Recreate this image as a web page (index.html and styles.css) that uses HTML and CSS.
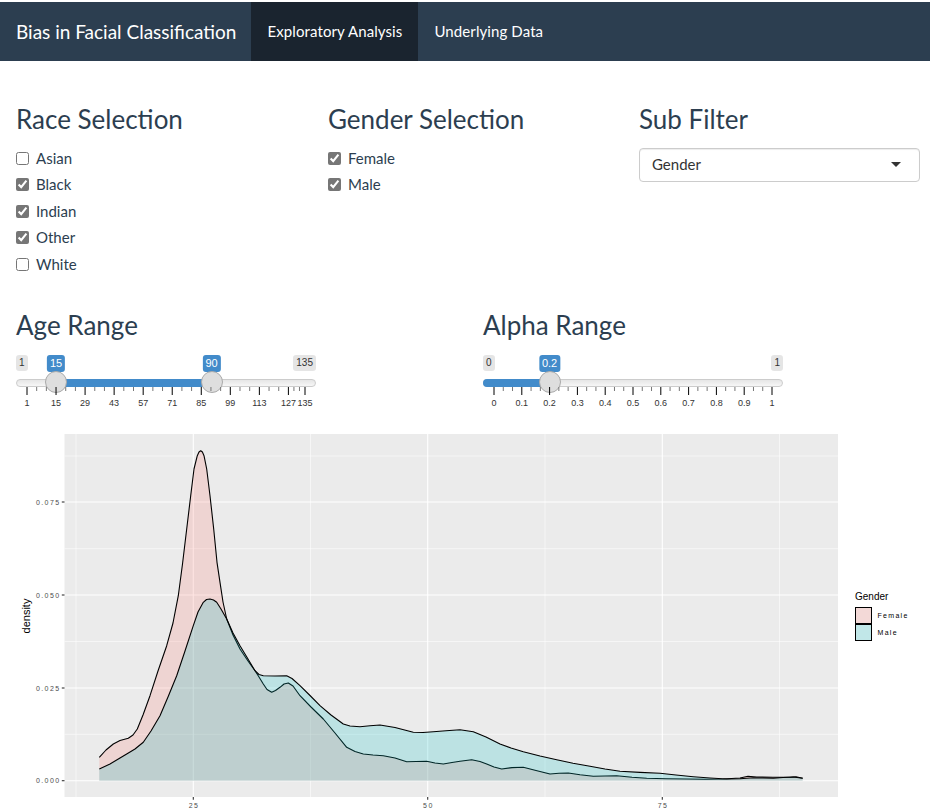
FILE: index.html
```html
<!DOCTYPE html>
<html lang="en">
<head>
<meta charset="utf-8">
<title>Bias in Facial Classification</title>
<link rel="stylesheet" href="styles.css">
</head>
<body>
<nav class="navbar">
  <span class="brand">Bias in Facial Classification</span>
  <ul class="nav">
    <li class="nav-item active"><a href="#">Exploratory Analysis</a></li>
    <li class="nav-item"><a href="#">Underlying Data</a></li>
  </ul>
</nav>

<main class="page">
  <section class="filters">
    <div class="col">
      <h3 class="title">Race Selection</h3>
      <div class="checks">
        <label class="check"><input type="checkbox">Asian</label>
        <label class="check"><input type="checkbox" checked>Black</label>
        <label class="check"><input type="checkbox" checked>Indian</label>
        <label class="check"><input type="checkbox" checked>Other</label>
        <label class="check"><input type="checkbox">White</label>
      </div>
    </div>
    <div class="col">
      <h3 class="title">Gender Selection</h3>
      <div class="checks">
        <label class="check"><input type="checkbox" checked>Female</label>
        <label class="check"><input type="checkbox" checked>Male</label>
      </div>
    </div>
    <div class="col">
      <h3 class="title">Sub Filter</h3>
      <div class="select"><span>Gender</span><span class="caret"></span></div>
    </div>
  </section>

  <section class="ranges">
    <div class="col">
      <h3 class="title">Age Range</h3>
      <div class="slider">
        <span class="irs-min">1</span>
        <span class="irs-max">135</span>
        <div class="irs-line"></div>
        <div class="irs-bar" style="left:40.04px;width:155.6px"></div>
        <span class="irs-val" style="left:40.04px">15</span>
        <span class="irs-val" style="left:195.64px">90</span>
        <span class="irs-handle" style="left:29.04px"></span>
        <span class="irs-handle" style="left:184.64px"></span>
        <svg class="irs-grid" width="300" height="24" viewBox="0 0 300 24">
          <g class="big">
            <line x1="11" y1="0" x2="11" y2="8"/><line x1="40.04" y1="0" x2="40.04" y2="8"/><line x1="69.09" y1="0" x2="69.09" y2="8"/><line x1="98.13" y1="0" x2="98.13" y2="8"/><line x1="127.18" y1="0" x2="127.18" y2="8"/><line x1="156.22" y1="0" x2="156.22" y2="8"/><line x1="185.27" y1="0" x2="185.27" y2="8"/><line x1="214.31" y1="0" x2="214.31" y2="8"/><line x1="243.36" y1="0" x2="243.36" y2="8"/><line x1="272.4" y1="0" x2="272.4" y2="8"/><line x1="289" y1="0" x2="289" y2="8"/>
          </g>
          <g class="small">
            <line x1="20.68" y1="0" x2="20.68" y2="4"/><line x1="30.36" y1="0" x2="30.36" y2="4"/>
            <line x1="49.72" y1="0" x2="49.72" y2="4"/><line x1="59.41" y1="0" x2="59.41" y2="4"/>
            <line x1="78.77" y1="0" x2="78.77" y2="4"/><line x1="88.45" y1="0" x2="88.45" y2="4"/>
            <line x1="107.81" y1="0" x2="107.81" y2="4"/><line x1="117.5" y1="0" x2="117.5" y2="4"/>
            <line x1="136.86" y1="0" x2="136.86" y2="4"/><line x1="146.54" y1="0" x2="146.54" y2="4"/>
            <line x1="165.9" y1="0" x2="165.9" y2="4"/><line x1="175.59" y1="0" x2="175.59" y2="4"/>
            <line x1="194.95" y1="0" x2="194.95" y2="4"/><line x1="204.63" y1="0" x2="204.63" y2="4"/>
            <line x1="223.99" y1="0" x2="223.99" y2="4"/><line x1="233.68" y1="0" x2="233.68" y2="4"/>
            <line x1="253.04" y1="0" x2="253.04" y2="4"/><line x1="262.72" y1="0" x2="262.72" y2="4"/>
            <line x1="277.93" y1="0" x2="277.93" y2="4"/><line x1="283.47" y1="0" x2="283.47" y2="4"/>
          </g>
          <g class="txt">
            <text x="11" y="19">1</text><text x="40.04" y="19">15</text><text x="69.09" y="19">29</text><text x="98.13" y="19">43</text><text x="127.18" y="19">57</text><text x="156.22" y="19">71</text><text x="185.27" y="19">85</text><text x="214.31" y="19">99</text><text x="243.36" y="19">113</text><text x="272.4" y="19">127</text><text x="289" y="19">135</text>
          </g>
        </svg>
      </div>
    </div>
    <div class="col">
      <h3 class="title">Alpha Range</h3>
      <div class="slider">
        <span class="irs-min">0</span>
        <span class="irs-max">1</span>
        <div class="irs-line"></div>
        <div class="irs-bar single" style="left:0;width:66.6px"></div>
        <span class="irs-val" style="left:66.6px">0.2</span>
        <span class="irs-handle" style="left:55.6px"></span>
        <svg class="irs-grid" width="300" height="24" viewBox="0 0 300 24">
          <g class="big">
            <line x1="11" y1="0" x2="11" y2="8"/><line x1="38.8" y1="0" x2="38.8" y2="8"/><line x1="66.6" y1="0" x2="66.6" y2="8"/><line x1="94.4" y1="0" x2="94.4" y2="8"/><line x1="122.2" y1="0" x2="122.2" y2="8"/><line x1="150" y1="0" x2="150" y2="8"/><line x1="177.8" y1="0" x2="177.8" y2="8"/><line x1="205.6" y1="0" x2="205.6" y2="8"/><line x1="233.4" y1="0" x2="233.4" y2="8"/><line x1="261.2" y1="0" x2="261.2" y2="8"/><line x1="289" y1="0" x2="289" y2="8"/>
          </g>
          <g class="small">
            <line x1="20.27" y1="0" x2="20.27" y2="4"/><line x1="29.53" y1="0" x2="29.53" y2="4"/>
            <line x1="48.07" y1="0" x2="48.07" y2="4"/><line x1="57.33" y1="0" x2="57.33" y2="4"/>
            <line x1="75.87" y1="0" x2="75.87" y2="4"/><line x1="85.13" y1="0" x2="85.13" y2="4"/>
            <line x1="103.67" y1="0" x2="103.67" y2="4"/><line x1="112.93" y1="0" x2="112.93" y2="4"/>
            <line x1="131.47" y1="0" x2="131.47" y2="4"/><line x1="140.73" y1="0" x2="140.73" y2="4"/>
            <line x1="159.27" y1="0" x2="159.27" y2="4"/><line x1="168.53" y1="0" x2="168.53" y2="4"/>
            <line x1="187.07" y1="0" x2="187.07" y2="4"/><line x1="196.33" y1="0" x2="196.33" y2="4"/>
            <line x1="214.87" y1="0" x2="214.87" y2="4"/><line x1="224.13" y1="0" x2="224.13" y2="4"/>
            <line x1="242.67" y1="0" x2="242.67" y2="4"/><line x1="251.93" y1="0" x2="251.93" y2="4"/>
            <line x1="270.47" y1="0" x2="270.47" y2="4"/><line x1="279.73" y1="0" x2="279.73" y2="4"/>
          </g>
          <g class="txt">
            <text x="11" y="19">0</text><text x="38.8" y="19">0.1</text><text x="66.6" y="19">0.2</text><text x="94.4" y="19">0.3</text><text x="122.2" y="19">0.4</text><text x="150" y="19">0.5</text><text x="177.8" y="19">0.6</text><text x="205.6" y="19">0.7</text><text x="233.4" y="19">0.8</text><text x="261.2" y="19">0.9</text><text x="289" y="19">1</text>
          </g>
        </svg>
      </div>
    </div>
  </section>

  <section class="plot">
    <svg class="chart" width="916" height="381" viewBox="15 430 916 381">
      <rect x="15" y="430" width="916" height="381" fill="#fff"/>
      <rect x="64.5" y="435" width="773.5" height="363" fill="#ebebeb"/>
      <g class="minor">
        <line x1="76" y1="435" x2="76" y2="798"/><line x1="310.5" y1="435" x2="310.5" y2="798"/><line x1="545" y1="435" x2="545" y2="798"/><line x1="779.5" y1="435" x2="779.5" y2="798"/>
        <line x1="64.5" y1="457" x2="838" y2="457"/><line x1="64.5" y1="549.7" x2="838" y2="549.7"/><line x1="64.5" y1="642.5" x2="838" y2="642.5"/><line x1="64.5" y1="735.3" x2="838" y2="735.3"/>
      </g>
      <g class="major">
        <line x1="193.3" y1="435" x2="193.3" y2="798"/><line x1="427.7" y1="435" x2="427.7" y2="798"/><line x1="662.3" y1="435" x2="662.3" y2="798"/>
        <line x1="64.5" y1="503" x2="838" y2="503"/><line x1="64.5" y1="596" x2="838" y2="596"/><line x1="64.5" y1="689" x2="838" y2="689"/><line x1="64.5" y1="781.7" x2="838" y2="781.7"/>
      </g>

      <path class="fill-f" d="M99.3,758.3 L106,751 L113.3,745 L120,741.5 L128.3,739.3 L133,736 L137.3,730 L143,716 L150,696.7 L158,672 L166.7,646.7 L173,624 L178.3,596.7 L182.5,565 L186.7,530 L190.7,496.7 L194,470 L197.3,456.7 L199,453 L200.7,451.7 L202.4,453 L204,456.7 L206.7,470 L210,496.7 L213.7,530 L217,563.3 L220,583.3 L223,603 L226.7,620 L233,636 L240,650 L248,662 L255,671.7 L259,678 L263.3,685 L267,690.5 L271.7,693.3 L275.5,691.5 L280,688.3 L284,685 L288.3,684 L293,687 L300,696.7 L311,708 L323.3,720 L335,734 L346.7,748.3 L355,752.5 L363.3,755 L373,756 L383.3,756.7 L395,759 L406.7,762.7 L416,762.5 L426.7,762.3 L435,764 L443.3,765 L452,763.5 L460,762.3 L471.7,760.7 L480,762.5 L486.7,765 L494,768 L501.7,770 L512,768.6 L523.3,768.3 L536,771.5 L550,775 L559,774.3 L568.3,774 L580,775.8 L593.3,777.3 L605,777 L616.7,776.7 L632,778.2 L646.7,779.3 L666,779.8 L686.7,780 L705,780.2 L723.3,780 L740,779 L748,777.3 L756.7,778 L773,778.3 L790,778.3 L796,777.8 L802.7,779.3 L802.7,781.7 L99.3,781.7 Z"/>
      <path class="line" d="M99.3,758.3 L106,751 L113.3,745 L120,741.5 L128.3,739.3 L133,736 L137.3,730 L143,716 L150,696.7 L158,672 L166.7,646.7 L173,624 L178.3,596.7 L182.5,565 L186.7,530 L190.7,496.7 L194,470 L197.3,456.7 L199,453 L200.7,451.7 L202.4,453 L204,456.7 L206.7,470 L210,496.7 L213.7,530 L217,563.3 L220,583.3 L223,603 L226.7,620 L233,636 L240,650 L248,662 L255,671.7 L259,678 L263.3,685 L267,690.5 L271.7,693.3 L275.5,691.5 L280,688.3 L284,685 L288.3,684 L293,687 L300,696.7 L311,708 L323.3,720 L335,734 L346.7,748.3 L355,752.5 L363.3,755 L373,756 L383.3,756.7 L395,759 L406.7,762.7 L416,762.5 L426.7,762.3 L435,764 L443.3,765 L452,763.5 L460,762.3 L471.7,760.7 L480,762.5 L486.7,765 L494,768 L501.7,770 L512,768.6 L523.3,768.3 L536,771.5 L550,775 L559,774.3 L568.3,774 L580,775.8 L593.3,777.3 L605,777 L616.7,776.7 L632,778.2 L646.7,779.3 L666,779.8 L686.7,780 L705,780.2 L723.3,780 L740,779 L748,777.3 L756.7,778 L773,778.3 L790,778.3 L796,777.8 L802.7,779.3"/>
      <path class="fill-m" d="M99.3,770 L110,765 L120,759 L126.7,755 L135,750 L143.3,743.3 L151,732 L160,716.7 L168,698 L176.7,676.7 L185,652 L193.3,626.7 L198,613 L203.3,603.3 L206.5,600.5 L210,600 L213.5,601 L216.7,603.3 L221,610 L226.7,620 L233,634 L240,646.7 L248,660 L255,671.7 L259,675.5 L263.3,676.7 L275,677 L286.7,676.7 L292,679.5 L300,686.7 L310,696.5 L320,706.7 L331,716 L343.3,725 L350,727 L360,727.7 L370,726.8 L380,726 L395,728.5 L413.3,733.3 L423,733.5 L433.3,732.7 L446,731.8 L460,730.7 L473.3,732.7 L486,738 L500,745 L511,749 L523.3,752.7 L540,757 L556.7,760.7 L573,764.2 L590,767.3 L605,770 L620,772.3 L640,773.4 L660,774.3 L676,776 L693.3,777.7 L710,779 L726.7,780 L740,779.8 L753.3,778.7 L763,779 L773.3,779.3 L783,778.5 L793.3,778 L802.7,779.3 L802.7,781.7 L99.3,781.7 Z"/>
      <path class="line" d="M99.3,770 L110,765 L120,759 L126.7,755 L135,750 L143.3,743.3 L151,732 L160,716.7 L168,698 L176.7,676.7 L185,652 L193.3,626.7 L198,613 L203.3,603.3 L206.5,600.5 L210,600 L213.5,601 L216.7,603.3 L221,610 L226.7,620 L233,634 L240,646.7 L248,660 L255,671.7 L259,675.5 L263.3,676.7 L275,677 L286.7,676.7 L292,679.5 L300,686.7 L310,696.5 L320,706.7 L331,716 L343.3,725 L350,727 L360,727.7 L370,726.8 L380,726 L395,728.5 L413.3,733.3 L423,733.5 L433.3,732.7 L446,731.8 L460,730.7 L473.3,732.7 L486,738 L500,745 L511,749 L523.3,752.7 L540,757 L556.7,760.7 L573,764.2 L590,767.3 L605,770 L620,772.3 L640,773.4 L660,774.3 L676,776 L693.3,777.7 L710,779 L726.7,780 L740,779.8 L753.3,778.7 L763,779 L773.3,779.3 L783,778.5 L793.3,778 L802.7,779.3"/>

      <g class="ticks">
        <line x1="61.8" y1="503" x2="64.5" y2="503"/><line x1="61.8" y1="596" x2="64.5" y2="596"/><line x1="61.8" y1="689" x2="64.5" y2="689"/><line x1="61.8" y1="781.7" x2="64.5" y2="781.7"/>
        <line x1="193.3" y1="798" x2="193.3" y2="800.8"/><line x1="427.7" y1="798" x2="427.7" y2="800.8"/><line x1="662.3" y1="798" x2="662.3" y2="800.8"/>
      </g>
      <g class="axis-y">
        <text x="60.5" y="505.5">0.075</text><text x="60.5" y="598.5">0.050</text><text x="60.5" y="691.5">0.025</text><text x="60.5" y="784.2">0.000</text>
      </g>
      <g class="axis-x">
        <text x="194" y="808.5">25</text><text x="428.4" y="808.5">50</text><text x="663" y="808.5">75</text>
      </g>
      <text class="ylab" transform="translate(30 617) rotate(-90)">density</text>

      <g class="legend">
        <text class="legend-title" x="855" y="601">Gender</text>
        <rect x="855" y="608" width="17" height="17" fill="#f2f2f2"/>
        <rect class="key-f" x="855.5" y="608.5" width="16" height="16"/>
        <rect x="855" y="625" width="17" height="17" fill="#f2f2f2"/>
        <rect class="key-m" x="855.5" y="625.5" width="16" height="16"/>
        <text class="legend-label" x="877.5" y="619">Female</text>
        <text class="legend-label" x="877.5" y="636">Male</text>
      </g>
    </svg>
  </section>
</main>
</body>
</html>
```

FILE: styles.css
```css
* { box-sizing: border-box; }

html, body {
  margin: 0;
  padding: 0;
  background: #fff;
}

body {
  font-family: Lato, "Open Sans", "Liberation Sans", sans-serif;
  font-size: 15px;
  line-height: 1.428571;
  color: #2c3e50;
}

/* ---------- navbar ---------- */
.navbar {
  margin: 2px 1px 0 0;
  height: 59px;
  background: #2c3e50;
  display: flex;
  align-items: stretch;
}

.brand {
  display: flex;
  align-items: center;
  padding: 0 15px 0 16px;
  font-size: 19px;
  color: #fff;
}

.nav {
  display: flex;
  margin: 0;
  padding: 0;
  list-style: none;
}

.nav-item a {
  display: flex;
  align-items: center;
  height: 100%;
  padding: 0 16px 0 16px;
  color: #fff;
  text-decoration: none;
  font-size: 15px;
  letter-spacing: 0.1px;
}

.nav-item.active a {
  background: #1a242f;
}

/* ---------- filters ---------- */
.page {
  padding-left: 16px;
}

.title {
  margin: 0;
  font-size: 26px;
  font-weight: 400;
  line-height: 1.1;
  color: #2c3e50;
}

.filters {
  display: grid;
  grid-template-columns: 312px 311px 281px;
  margin-top: 44px;
}

.checks {
  display: flex;
  flex-direction: column;
  gap: 5.1px;
  margin-top: 14px;
}

.check {
  display: flex;
  align-items: center;
  gap: 7px;
  height: 21.43px;
  line-height: 21.43px;
}

.check input {
  margin: 0;
  width: 13px;
  height: 13px;
  accent-color: #767676;
}

.select {
  position: relative;
  margin-top: 14px;
  height: 34px;
  border: 1px solid #ccc;
  border-radius: 4px;
  box-shadow: inset 0 1px 1px rgba(0, 0, 0, 0.075);
  padding: 0 12px;
  display: flex;
  align-items: center;
  justify-content: space-between;
  color: #333;
}

.caret {
  width: 0;
  height: 0;
  border-style: solid;
  border-width: 5px 5px 0;
  border-color: #333 transparent transparent;
  margin-right: 6px;
}

/* ---------- sliders ---------- */
.ranges {
  display: grid;
  grid-template-columns: 467px 300px;
  margin-top: 36px;
}

.slider {
  position: relative;
  width: 300px;
  height: 56px;
  margin-top: 15.6px;
  font-family: "Liberation Sans", Arial, sans-serif;
}

.irs-min, .irs-max {
  position: absolute;
  top: 0;
  padding: 1px 3px;
  font-size: 10px;
  line-height: 1.333;
  color: #333;
  background: rgba(0, 0, 0, 0.1);
  border-radius: 3px;
}

.irs-min { left: 0; }
.irs-max { right: 0; }

.irs-val {
  position: absolute;
  top: 0;
  transform: translateX(-50%);
  padding: 1px 3px;
  font-size: 11px;
  line-height: 1.333;
  color: #fff;
  background: #428bca;
  border-radius: 3px;
}

.irs-line {
  position: absolute;
  top: 24px;
  left: 0;
  right: 0;
  height: 8px;
  border: 1px solid #ccc;
  border-radius: 8px;
  background: linear-gradient(to bottom, #ddd -50%, #fff 150%);
}

.irs-bar {
  position: absolute;
  top: 24px;
  height: 8px;
  background: #428bca;
}

.irs-bar.single {
  border-radius: 8px 0 0 8px;
}

.irs-handle {
  position: absolute;
  top: 16px;
  width: 22px;
  height: 22px;
  border: 1px solid #aaa;
  border-radius: 50%;
  background: #dedede;
}

.irs-grid {
  position: absolute;
  top: 32px;
  left: 0;
  display: block;
}

.irs-grid .big line { stroke: #000; stroke-width: 1; }
.irs-grid .small line { stroke: #777; stroke-width: 1; }
.irs-grid .txt text {
  font-family: "Liberation Sans", Arial, sans-serif;
  font-size: 9px;
  fill: #333;
  text-anchor: middle;
}

/* ---------- plot ---------- */
.plot {
  margin-top: 17.6px;
  margin-left: -1px;
}

.chart {
  display: block;
  font-family: "Liberation Sans", Arial, sans-serif;
}

.chart .minor line { stroke: #fff; stroke-width: 0.55; }
.chart .major line { stroke: #fff; stroke-width: 1.1; }
.chart .ticks line { stroke: #333; stroke-width: 1.1; }

.chart .fill-f { fill: #F8766D; fill-opacity: 0.2; stroke: none; }
.chart .fill-m { fill: #00BFC4; fill-opacity: 0.2; stroke: none; }
.chart .line { fill: none; stroke: #000; stroke-width: 1.1; stroke-linejoin: round; }

.chart .axis-y text {
  font-size: 7px;
  letter-spacing: 1.4px;
  fill: #4d4d4d;
  text-anchor: end;
}

.chart .axis-x text {
  font-size: 7px;
  letter-spacing: 1.4px;
  fill: #4d4d4d;
  text-anchor: middle;
}

.chart .ylab {
  font-size: 11px;
  fill: #000;
  text-anchor: middle;
}

.chart .legend-title {
  font-size: 10px;
  fill: #000;
}

.chart .legend-label {
  font-size: 7px;
  letter-spacing: 1.3px;
  fill: #000;
}

.chart .key-f { fill: #F8766D; fill-opacity: 0.2; stroke: #000; stroke-width: 1; }
.chart .key-m { fill: #00BFC4; fill-opacity: 0.2; stroke: #000; stroke-width: 1; }
```
